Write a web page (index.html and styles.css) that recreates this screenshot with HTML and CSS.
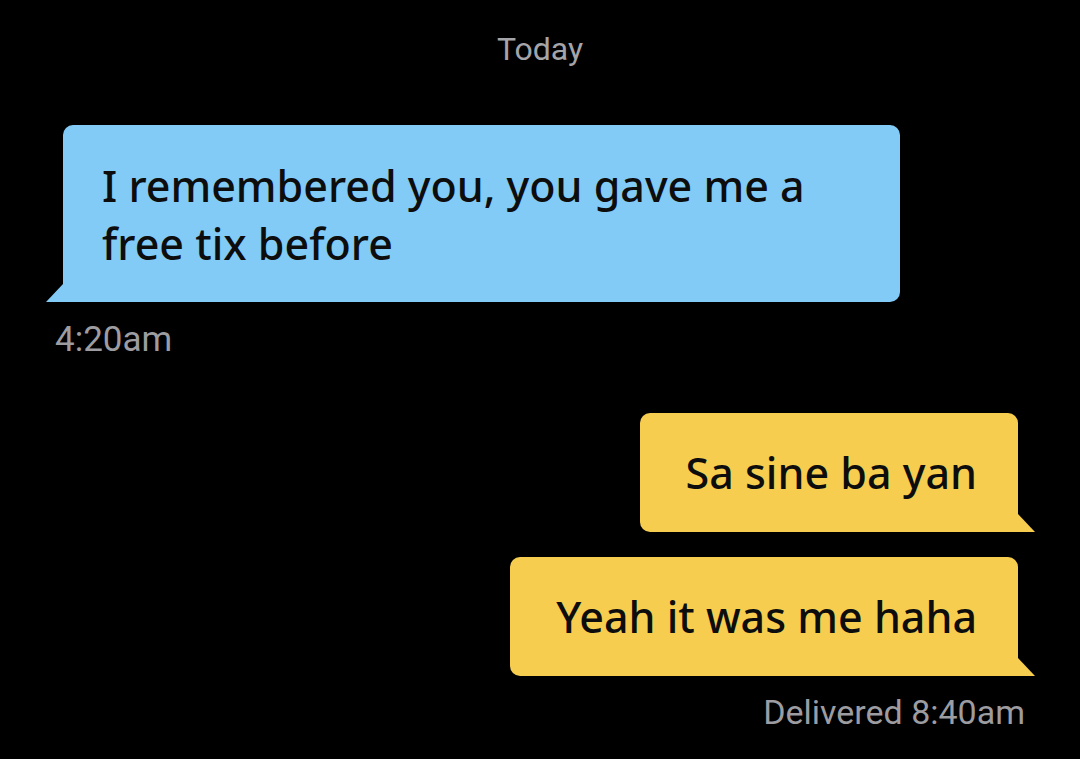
FILE: index.html
```html
<!DOCTYPE html>
<html>
<head>
<meta charset="utf-8">
<link rel="stylesheet" href="styles.css">
</head>
<body>
<main class="chat">
  <div class="day">Today</div>
  <div class="msg msg-in">
    <div class="bubble bubble-in">I remembered you, you gave me a free tix before</div>
    <div class="meta meta-in">4:20am</div>
  </div>
  <div class="msg msg-out">
    <div class="bubble bubble-out">Sa sine ba yan</div>
    <div class="bubble bubble-out">Yeah it was me haha</div>
    <div class="meta meta-out">Delivered 8:40am</div>
  </div>
</main>
</body>
</html>
```
FILE: styles.css
```css
html, body {
  margin: 0;
  padding: 0;
  background: #000;
  height: 100%;
}
.chat {
  display: flex;
  flex-direction: column;
  padding-top: 29px;
}
.day {
  font-family: Roboto, "Liberation Sans", sans-serif;
  font-size: 32px;
  line-height: 40px;
  color: #a4a4a9;
  text-align: center;
}
.msg {
  display: flex;
  flex-direction: column;
}
.msg-in {
  align-items: flex-start;
  padding-left: 63px;
  margin-top: 56px;
}
.msg-out {
  align-items: flex-end;
  padding-right: 62px;
  margin-top: 53px;
  gap: 25px;
}
.bubble {
  position: relative;
  box-sizing: border-box;
  font-family: "Noto Sans", "Open Sans", sans-serif;
  font-size: 43px;
  font-weight: 500;
  line-height: 58px;
  color: #0d0d0d;
  padding: 32px 40px 29px;
  border-radius: 10px;
}
.bubble::after {
  content: "";
  position: absolute;
  bottom: 0;
  width: 17px;
  height: 18px;
}
.bubble-in {
  background: #82cbf6;
  width: 837px;
  padding-left: 39px;
  border-bottom-left-radius: 0;
}
.bubble-in::after {
  left: -17px;
  background: #82cbf6;
  clip-path: polygon(100% 0, 100% 100%, 0 100%);
}
.bubble-out {
  background: #f6cd4f;
  padding-top: 31px;
  padding-bottom: 30px;
  padding-left: 46px;
  padding-right: 41px;
  border-bottom-right-radius: 0;
}
.bubble-out::after {
  right: -17px;
  background: #f6cd4f;
  clip-path: polygon(0 0, 100% 100%, 0 100%);
}
.meta {
  font-family: Roboto, "Liberation Sans", sans-serif;
  font-size: 34px;
  line-height: 40px;
  color: #9c9ca1;
}
.meta-in {
  font-size: 35px;
  margin-top: 18px;
  margin-left: -8px;
}
.meta-out {
  margin-top: -9px;
  margin-right: -7px;
}
```
